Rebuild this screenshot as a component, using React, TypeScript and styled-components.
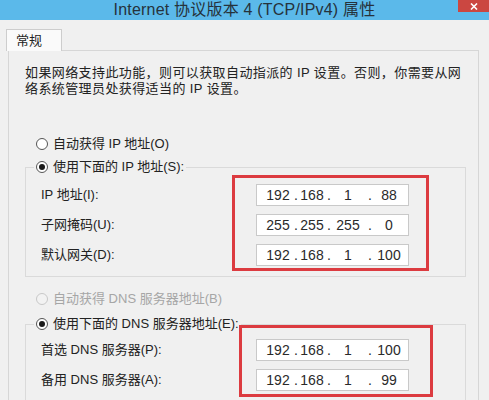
import styled, { createGlobalStyle } from "styled-components";

const GlobalStyle = createGlobalStyle`
  html, body {
    margin: 0;
    padding: 0;
  }
  body {
    background: #f0f0f0;
    font-family: "Liberation Sans", "Noto Sans CJK SC", sans-serif;
    color: #222;
  }
`

const Window = styled.div`
  display: flex;
  flex-direction: column;
  width: 489px;
  height: 400px;
  overflow: hidden;
  background: #f0f0f0;
`
const TitleBar = styled.header`
  position: relative;
  display: flex;
  align-items: center;
  justify-content: center;
  height: 20px;
  background: #5bb9ea;
  color: #26323b;
  font-size: 16px;
  line-height: 20px;
  letter-spacing: 0.2px;
`
const CloseButton = styled.div`
  position: absolute;
  top: 0;
  right: 0;
  display: flex;
  align-items: center;
  justify-content: center;
  width: 31px;
  height: 12px;
  background: #cb4741;
`
const Body = styled.div`
  display: flex;
  flex-direction: column;
  flex: 1;
  padding: 9px 10px 0 8px;
`
const Tab = styled.div`
  position: relative;
  z-index: 1;
  box-sizing: border-box;
  width: 56px;
  height: 22px;
  margin: 0 0 -1px -2px;
  padding-left: 9px;
  border: 1px solid #cdcdcd;
  border-bottom: none;
  background: #fafafa;
  font-size: 13px;
  line-height: 21px;
`
const Panel = styled.section`
  flex: 1;
  padding: 14px 12px 0 16px;
  border: 1px solid #d6d6d6;
  background: #f0f0f0;
`
const Description = styled.p`
  margin: 0;
  font-size: 13px;
  line-height: 16px;
  letter-spacing: 0.4px;
  white-space: nowrap;
`
const RadioRow = styled.label<{ $top?: number; $disabled?: boolean; $indent?: number }>`
  display: flex;
  align-items: center;
  gap: 5px;
  height: 16px;
  margin: ${p => p.$top ?? 0}px 0 0 ${p => p.$indent ?? 11}px;
  color: ${p => (p.$disabled ? "#a6a6a6" : "#222")};
  font-size: 13px;
  line-height: 16px;
  white-space: nowrap;
`
const RadioDot = styled.span<{ $checked?: boolean; $disabled?: boolean }>`
  position: relative;
  box-sizing: border-box;
  width: 12px;
  height: 12px;
  border-radius: 50%;
  border: 1px solid ${p => (p.$disabled ? "#c8c8c8" : "#555")};
  background: ${p => (p.$disabled ? "#f2f2f2" : "#fff")};

  &::after {
    content: "";
    display: ${p => (p.$checked ? "block" : "none")};
    position: absolute;
    left: 2px;
    top: 2px;
    width: 6px;
    height: 6px;
    border-radius: 50%;
    background: #1a1a1a;
  }
`
const Group = styled.fieldset<{ $top: number }>`
  min-width: 0;
  margin: ${p => p.$top}px 0 0 0;
  padding: 0;
  border: 1px solid #dadada;
`
const GroupLegend = styled.legend`
  margin-left: 8px;
  padding: 0 2px;
`
const GroupBody = styled.div<{ $bottom: number }>`
  display: flex;
  align-items: flex-start;
  padding: 0 0 ${p => p.$bottom}px 15px;
`
const LabelColumn = styled.div<{ $width: number; $top: number }>`
  display: flex;
  flex-direction: column;
  flex: none;
  gap: 8px;
  width: ${p => p.$width}px;
  padding-top: ${p => p.$top}px;
`
const FieldLabel = styled.div`
  height: 22px;
  font-size: 13px;
  line-height: 22px;
  white-space: nowrap;
`
const Highlight = styled.div<{ $pad: string; $shift: number }>`
  display: flex;
  flex-direction: column;
  gap: 8px;
  margin-top: ${p => p.$shift}px;
  padding: ${p => p.$pad};
  border: 3px solid #dc3b40;
`
const IpBox = styled.div`
  display: grid;
  grid-template-columns: 6px 30px 6px 26px 8px 30px 14px 24px;
  align-items: center;
  box-sizing: border-box;
  width: 153px;
  height: 22px;
  border: 1px solid #c9c9c9;
  background: #fff;
  font-size: 14px;
  line-height: 20px;
  color: #2a2a2a;
`
const Octet = styled.span`
  text-align: center;
  white-space: nowrap;
`

const IpInput = ({ value }: { value: string }) => {
  const parts = value.split(".");
  return (
    <IpBox>
      <span />
      <Octet>{parts[0]}</Octet>
      <Octet>.</Octet>
      <Octet>{parts[1]}</Octet>
      <Octet>.</Octet>
      <Octet>{parts[2]}</Octet>
      <Octet>.</Octet>
      <Octet>{parts[3]}</Octet>
    </IpBox>
  );
};

const ipFields = [
  { label: "IP 地址(I):", value: "192.168.1.88" },
  { label: "子网掩码(U):", value: "255.255.255.0" },
  { label: "默认网关(D):", value: "192.168.1.100" },
];
const dnsFields = [
  { label: "首选 DNS 服务器(P):", value: "192.168.1.100" },
  { label: "备用 DNS 服务器(A):", value: "192.168.1.99" },
];

const App = () => {
  return (
    <>
      <GlobalStyle />
      <Window>
        <TitleBar>
          Internet 协议版本 4 (TCP/IPv4) 属性
          <CloseButton>
            <svg width="8" height="7" viewBox="0 0 8 7">
              <path d="M1 0.5 L7 6.5 M7 0.5 L1 6.5" stroke="#fff" strokeWidth="1.6" />
            </svg>
          </CloseButton>
        </TitleBar>
        <Body>
          <Tab>常规</Tab>
          <Panel>
            <Description>
              如果网络支持此功能，则可以获取自动指派的 IP 设置。否则，你需要从网
              <br />
              络系统管理员处获得适当的 IP 设置。
            </Description>

            <RadioRow $top={39}>
              <RadioDot />
              自动获得 IP 地址(O)
            </RadioRow>
            <Group $top={7}>
              <GroupLegend>
                <RadioRow $indent={0}>
                  <RadioDot $checked />
                  使用下面的 IP 地址(S):
                </RadioRow>
              </GroupLegend>
              <GroupBody $bottom={5}>
                <LabelColumn $width={191} $top={9}>
                  {ipFields.map(f => (
                    <FieldLabel key={f.label}>{f.label}</FieldLabel>
                  ))}
                </LabelColumn>
                <Highlight $pad="6px 17px 2px 21px" $shift={0}>
                  {ipFields.map(f => (
                    <IpInput key={f.label} value={f.value} />
                  ))}
                </Highlight>
              </GroupBody>
            </Group>

            <RadioRow $top={14} $disabled>
              <RadioDot $disabled />
              自动获得 DNS 服务器地址(B)
            </RadioRow>
            <Group $top={9}>
              <GroupLegend>
                <RadioRow $indent={0}>
                  <RadioDot $checked />
                  使用下面的 DNS 服务器地址(E):
                </RadioRow>
              </GroupLegend>
              <GroupBody $bottom={20}>
                <LabelColumn $width={198} $top={7}>
                  {dnsFields.map(f => (
                    <FieldLabel key={f.label}>{f.label}</FieldLabel>
                  ))}
                </LabelColumn>
                <Highlight $pad="11px 21px 3px 14px" $shift={-7}>
                  {dnsFields.map(f => (
                    <IpInput key={f.label} value={f.value} />
                  ))}
                </Highlight>
              </GroupBody>
            </Group>
          </Panel>
        </Body>
      </Window>
    </>
  );
};

export default App;
